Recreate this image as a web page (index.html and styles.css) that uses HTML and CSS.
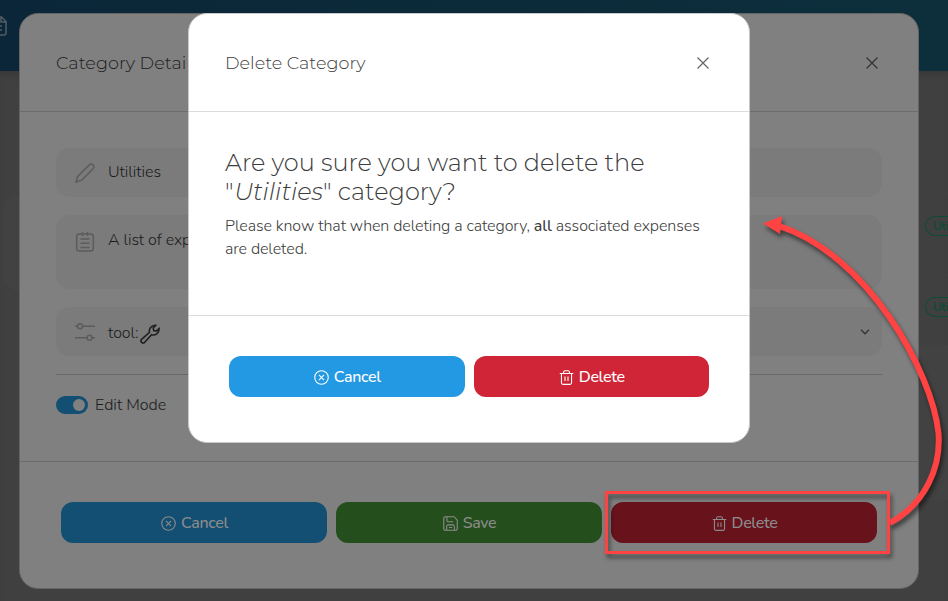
FILE: index.html
```
<!DOCTYPE html>
<html lang="en">
<head>
<meta charset="utf-8">
<title>Delete Category</title>
<link rel="stylesheet" href="styles.css">
</head>
<body>
<svg class="defs" width="0" height="0">
  <symbol id="i-cancel" viewBox="0 0 16 16"><circle cx="8" cy="8" r="7.2"/><path d="M5.300 5.300l5.400 5.400M10.700 5.300l-5.400 5.400"/></symbol>
  <symbol id="i-trash" viewBox="0 0 16 16"><path d="M.8 3.700h14.400M2.600 3.700v9.800a1.800 1.800 0 0 0 1.800 1.800h7.200a1.800 1.800 0 0 0 1.800-1.800V3.700M4.900 3.500V2.300A1.500 1.500 0 0 1 6.400.8h3.200a1.500 1.500 0 0 1 1.500 1.500v1.200M6.400 7v4.600M9.600 7v4.600"/></symbol>
  <symbol id="i-save" viewBox="0 0 16 16"><path d="M2.600.8h9.200l3.400 3.600v9a1.800 1.800 0 0 1-1.800 1.800H2.600a1.800 1.800 0 0 1-1.800-1.800V2.600A1.800 1.800 0 0 1 2.600.8zM4.200.9v4.200a1 1 0 0 0 1 1h5.600M3.900 15v-4a1.500 1.500 0 0 1 1.500-1.500h5.200a1.500 1.500 0 0 1 1.500 1.500v4M6.500 12.200h3.200"/></symbol>
  <symbol id="i-close" viewBox="0 0 12 12"><path d="M.5.5l11 11M11.500.5l-11 11"/></symbol>
</svg>
<div class="page">
  <header class="topbar">
    <svg class="doc" viewBox="0 0 16 20"><path d="M1 1h9.500l4.500 4.500V17a2 2 0 0 1-2 2H1M10 1v5h5M1 10h10M1 14h10"/></svg>
  </header>
  <main class="board">
    <div class="left-card"></div>
    <div class="right-col">
      <div class="row"><span class="tag">Uti</span></div>
      <div class="row"><span class="tag">Uti</span></div>
      <div class="row tall"></div>
    </div>
  </main>
</div>

<section class="modal details">
  <div class="head">
    <h2>Category Detai</h2>
    <svg class="close"><use href="#i-close"/></svg>
  </div>
  <div class="form">
    <div class="field">
      <svg class="ico" viewBox="0 0 20 20"><path d="M1 19l1.600-5.500L14.300 1.900a2.600 2.600 0 0 1 3.800 3.800L6.500 17.400z"/></svg>
      <span>Utilities</span>
    </div>
    <div class="field area">
      <svg class="ico" viewBox="0 0 20 20"><rect x="1.700" y="2" width="16.600" height="17" rx="2.500"/><path d="M7.500 0v4M12.500 0v4M5.500 7h9M5.500 11.300h9M5.500 15.600h9"/></svg>
      <span>A list of exp</span>
    </div>
    <div class="field tool">
      <svg class="ico" viewBox="0 0 20 20"><path d="M0 4.300h2.700M7.500 4.300H20M0 15.700h12M17 15.700h3"/><circle cx="5.100" cy="4.300" r="2.500"/><circle cx="14.500" cy="15.700" r="2.500"/></svg>
      <span>tool:</span>
      <svg class="wrench" viewBox="0 0 20 20"><path d="M1.300 15.700l8.200-7.400C8.600 5.200 11.300.9 15.600 1.300L13.200 4l.6 2.700 2.600.2 2.700-2.200c.2 4.600-3.800 7.200-7.500 6L4.500 18.500c-2 1.400-4.600-1-3.200-2.800z"/></svg>
      <svg class="chev" viewBox="0 0 10 6"><path d="M1 .8l4 4 4-4"/></svg>
    </div>
    <hr>
    <div class="switch"><i class="toggle"></i><span>Edit Mode</span></div>
  </div>
  <div class="actions">
    <button class="btn blue"><svg><use href="#i-cancel"/></svg>Cancel</button>
    <button class="btn green"><svg><use href="#i-save"/></svg>Save</button>
    <button class="btn red"><svg><use href="#i-trash"/></svg>Delete</button>
  </div>
</section>

<section class="modal confirm">
  <div class="head">
    <h2>Delete Category</h2>
    <svg class="close"><use href="#i-close"/></svg>
  </div>
  <div class="message">
    <h1>Are you sure you want to delete the<br>"<em>Utilities</em>" category?</h1>
    <p>Please know that when deleting a category, <b>all</b> associated expenses<br>are deleted.</p>
  </div>
  <div class="actions">
    <button class="btn blue"><svg><use href="#i-cancel"/></svg>Cancel</button>
    <button class="btn red"><svg><use href="#i-trash"/></svg>Delete</button>
  </div>
</section>

<svg class="callout" viewBox="0 0 948 601">
  <rect x="606.500" y="492.500" width="282" height="60"/>
  <path class="curve" d="M890 523C926 503 941 467 938.500 433C932 372 868 255 779 226"/>
  <path class="tip" d="M763 223.500L782 216L780 234z"/>
</svg>
</body>
</html>
```
FILE: styles.css
```
* { box-sizing: border-box; }
body {
  margin: 0;
  width: 948px;
  height: 601px;
  overflow: hidden;
  position: relative;
  font: 300 16px/23px Nunito, "Open Sans", sans-serif;
  letter-spacing: -.08px;
  color: #3c3c3c;
}
h1, h2, p { margin: 0; }
svg { fill: none; stroke: currentColor; flex: none; }
.defs { position: absolute; }

.page { height: 601px; background: #404040; overflow: hidden; }
.topbar {
  height: 71px;
  background: linear-gradient(90deg, #0a2638, #0d2f3c);
  color: #525c63;
  padding-top: 16px;
}
.doc { display: block; width: 16px; height: 20px; margin-left: -9px; stroke-width: 1.5; }
.board {
  height: 530px;
  display: flex;
  justify-content: space-between;
  box-shadow: inset 0 8px 8px -6px #363636;
}
.left-card { width: 60px; height: 96px; margin: 124px 0 0 3px; border-radius: 16px; background: #424242; }
.right-col { width: 29px; padding-top: 122px; }
.row { height: 81px; padding: 22px 0 0 6px; border-top: 1px solid #424242; }
.row.tall { height: 155px; background: #424242; margin-top: -10px; }
.tag {
  display: block;
  height: 20px;
  border: 1px solid #0b4c35;
  border-right: 0;
  border-radius: 10px 0 0 10px;
  padding-left: 7px;
  font-size: 12px;
  font-weight: 600;
  line-height: 18px;
  letter-spacing: -.2px;
  color: #0b4c35;
}

.modal {
  position: absolute;
  top: 13px;
  border: 1px solid;
  border-radius: 19px;
  display: flex;
  flex-direction: column;
}
.details { left: 19px; width: 900px; height: 576px; background: #808080; border-color: #646464; color: #1c1c1c; }
.confirm { left: 188px; width: 562px; height: 430px; background: #fff; border-color: #c8c8c8; }

.head {
  height: 98px;
  flex: none;
  border-bottom: 1px solid #dcdcdc;
  padding: 0 40px 0 36px;
  display: flex;
  align-items: center;
  justify-content: space-between;
}
h2 { font: 300 17.6px/24px Montserrat, Inter, sans-serif; letter-spacing: 0; }
.details h2 { letter-spacing: .05px; }
.close { width: 12px; height: 12px; stroke-width: 1.2; color: #333; }
.confirm .close { color: #666; }

.form { flex: 1; padding: 36px 36px 0; }
.field {
  height: 49px;
  border-radius: 14px;
  background: #7b7b7b;
  padding: 0 12px 0 20px;
  display: flex;
  align-items: center;
  margin-bottom: 18px;
}
.field.area { height: 74px; align-items: flex-start; padding-top: 14px; }
.field.area .ico { margin-top: 3px; }
.tool span { padding-top: 3px; }
.ico { width: 20px; height: 20px; margin: 0 13px 0 -1px; stroke-width: 1.5; color: #5c5c5c; }
.wrench { width: 20px; height: 20px; margin: 5px 0 0 1.5px; stroke-width: 1.6; color: #202020; }
.chev { width: 10px; height: 6px; margin-left: auto; stroke-width: 1.3; color: #333; }
hr { border: 0; height: 1px; background: #686868; margin: 0; }
.switch { display: flex; align-items: center; margin-top: 18px; gap: 7px; letter-spacing: 0; }
.switch span { padding-top: 1px; margin-bottom: -1px; }
.toggle { width: 32px; height: 18px; border-radius: 9px; background: #134f73; display: flex; justify-content: flex-end; padding: 3px; }
.toggle::after { content: ""; width: 12px; height: 12px; border-radius: 50%; background: #808080; }

.actions {
  height: 127px;
  flex: none;
  border-top: 1px solid #dcdcdc;
  padding: 40px 41px 0;
  display: flex;
  gap: 9px;
}
.confirm .actions { padding: 40px 40px 0; }
.btn {
  flex: 1;
  height: 41px;
  border: 0;
  border-radius: 12px;
  padding: 0 0 0 1px;
  color: #fff;
  font: 500 16px/24px Nunito, "Open Sans", sans-serif;
  letter-spacing: -.35px;
  display: flex;
  align-items: center;
  justify-content: center;
  gap: 5px;
}
.btn svg { width: 15px; height: 15px; margin-top: 1px; stroke-width: 1.15; }
.blue { background: #2499e3; }
.green { background: #489e3a; }
.red { background: #cf2536; }

.details .head, .details .actions { border-color: #6c6c6c; }
.details .btn { color: #8c8c8c; }
.details .blue { background: #134f73; }
.details .green { background: #244f1d; }
.details .red { background: #68121b; }

.message { flex: 1; padding: 37px 36px 0; }
h1 {
  font: 300 24px/28.800px Montserrat, Inter, sans-serif;
  letter-spacing: 0;
  white-space: nowrap;
  margin-bottom: 8px;
}
h1 em { margin-left: 1px; }
.message p { white-space: nowrap; }
.message b { font-weight: 500; }

.callout {
  position: absolute;
  left: 0;
  top: 0;
  width: 948px;
  height: 601px;
  stroke: #ff4242;
  filter: drop-shadow(2px 4px 2px rgba(0, 0, 0, .5));
}
.callout rect { stroke-width: 3; }
.curve { stroke-width: 6; }
.tip { fill: #ff4242; stroke: none; }
```
